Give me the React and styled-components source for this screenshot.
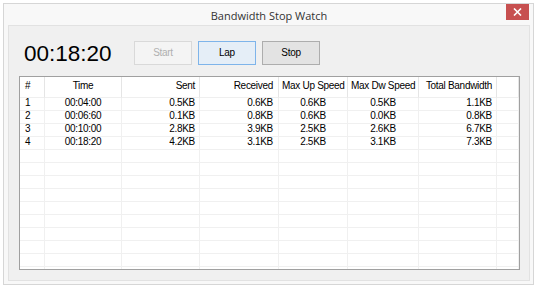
import React from 'react';
import styled, { createGlobalStyle } from 'styled-components';

const GlobalStyle = createGlobalStyle`
    html, body {
        margin: 0;
        padding: 0;
        background: #ffffff;
    }
    body {
        font-family: "Liberation Sans", Arial, sans-serif;
    }
`;

const Window = styled.div`
    margin: 3px 0 0 3px;
    width: 531px;
    height: 282px;
    box-sizing: border-box;
    border: 1px solid #d6d6d6;
    background: #f8f8f8;
    display: flex;
    flex-direction: column;
    padding: 0 3px 3px 4px;
`;

const TitleBar = styled.div`
    height: 20px;
    flex: none;
    position: relative;
    display: flex;
    align-items: center;
    justify-content: center;
    font-family: "Open Sans", "Noto Sans", sans-serif;
    font-size: 11px;
    color: #333333;
    padding-top: 1px;
`;

const CloseButton = styled.div`
    position: absolute;
    right: 1px;
    top: 0;
    width: 23px;
    height: 16px;
    background: #c75050;
    display: flex;
    align-items: center;
    justify-content: center;
`;

const Client = styled.div`
    flex: 1;
    min-height: 0;
    border: 1px solid #e2e2e2;
    background: #f0f0f0;
    display: flex;
    flex-direction: column;
    padding: 14px 9px 10px 10px;
`;

const Toolbar = styled.div`
    display: flex;
    align-items: center;
    height: 25px;
    flex: none;
    margin-bottom: 11px;
`;

const Clock = styled.div`
    font-family: "Liberation Sans", Arial, sans-serif;
    font-size: 22.5px;
    color: #000000;
    margin-left: 5px;
    width: 110px;
    line-height: 25px;
    padding-top: 1px;
`;

const Button = styled.div`
    width: 58px;
    height: 24px;
    box-sizing: border-box;
    margin-right: 6px;
    display: flex;
    align-items: center;
    justify-content: center;
    font-size: 10px;
    letter-spacing: -0.3px;
    border: 1px solid ${p => p.$focused ? '#7eb4ea' : p.$disabled ? '#d9d9d9' : '#adadad'};
    background: ${p => p.$focused ? '#e5eef7' : p.$disabled ? '#f4f4f4' : '#e3e3e3'};
    color: ${p => p.$disabled ? '#b0b0b0' : '#000000'};
`;

const List = styled.div`
    flex: 1;
    min-height: 0;
    border: 1px solid #a0a0a0;
    background: #ffffff;
    overflow: hidden;
`;

const Grid = styled.div`
    display: grid;
    grid-template-columns: 25px 77px 78px 79px 69px 71px 78px 1fr;
    grid-template-rows: 21px;
    grid-auto-rows: 13px;
    font-size: 10px;
    letter-spacing: -0.3px;
    color: #000000;
`;

const HeadCell = styled.div`
    line-height: 18px;
    padding: 0 ${p => p.$pad || 3}px;
    text-align: ${p => p.$align || 'left'};
    border-right: 1px solid #e5e5e5;
    border-bottom: 1px solid #efefef;
    white-space: nowrap;
    overflow: hidden;
`;

const Cell = styled.div`
    line-height: 10px;
    padding: 0 ${p => p.$pad || 3}px;
    text-align: ${p => p.$align || 'left'};
    border-right: 1px solid #f0f0f0;
    border-bottom: 1px solid #f0f0f0;
    white-space: nowrap;
    overflow: hidden;
`;

const columns = [
    { title: '#', align: 'left', pad: 5 },
    { title: 'Time', align: 'center' },
    { title: 'Sent', align: 'right', pad: 4 },
    { title: 'Received', align: 'right', pad: 5 },
    { title: 'Max Up Speed', align: 'center' },
    { title: 'Max Dw Speed', align: 'center' },
    { title: 'Total Bandwidth', align: 'right', pad: 4 },
    { title: '', align: 'left' },
];

const laps = [
    ['1', '00:04:00', '0.5KB', '0.6KB', '0.6KB', '0.5KB', '1.1KB', ''],
    ['2', '00:06:60', '0.1KB', '0.8KB', '0.6KB', '0.0KB', '0.8KB', ''],
    ['3', '00:10:00', '2.8KB', '3.9KB', '2.5KB', '2.6KB', '6.7KB', ''],
    ['4', '00:18:20', '4.2KB', '3.1KB', '2.5KB', '3.1KB', '7.3KB', ''],
];

const rows = [...laps, ...Array.from({ length: 11 }, () => columns.map(() => ''))];

const App = () => {
    return (
        <>
            <GlobalStyle />
            <Window>
                <TitleBar>
                    Bandwidth Stop Watch
                    <CloseButton>
                        <svg width="9" height="8" viewBox="0 0 9 8">
                            <path d="M1 0.5 L8 7.5 M8 0.5 L1 7.5" stroke="#ffffff" strokeWidth="1.6" />
                        </svg>
                    </CloseButton>
                </TitleBar>
                <Client>
                    <Toolbar>
                        <Clock>00:18:20</Clock>
                        <Button $disabled>Start</Button>
                        <Button $focused>Lap</Button>
                        <Button>Stop</Button>
                    </Toolbar>
                    <List>
                        <Grid>
                            {columns.map((c, i) => (
                                <HeadCell key={i} $align={c.align} $pad={c.pad}>{c.title}</HeadCell>
                            ))}
                            {rows.map((r, ri) => r.map((v, ci) => (
                                <Cell key={ri + '-' + ci} $align={columns[ci].align} $pad={columns[ci].pad}>{v}</Cell>
                            )))}
                        </Grid>
                    </List>
                </Client>
            </Window>
        </>
    );
};

export default App;
